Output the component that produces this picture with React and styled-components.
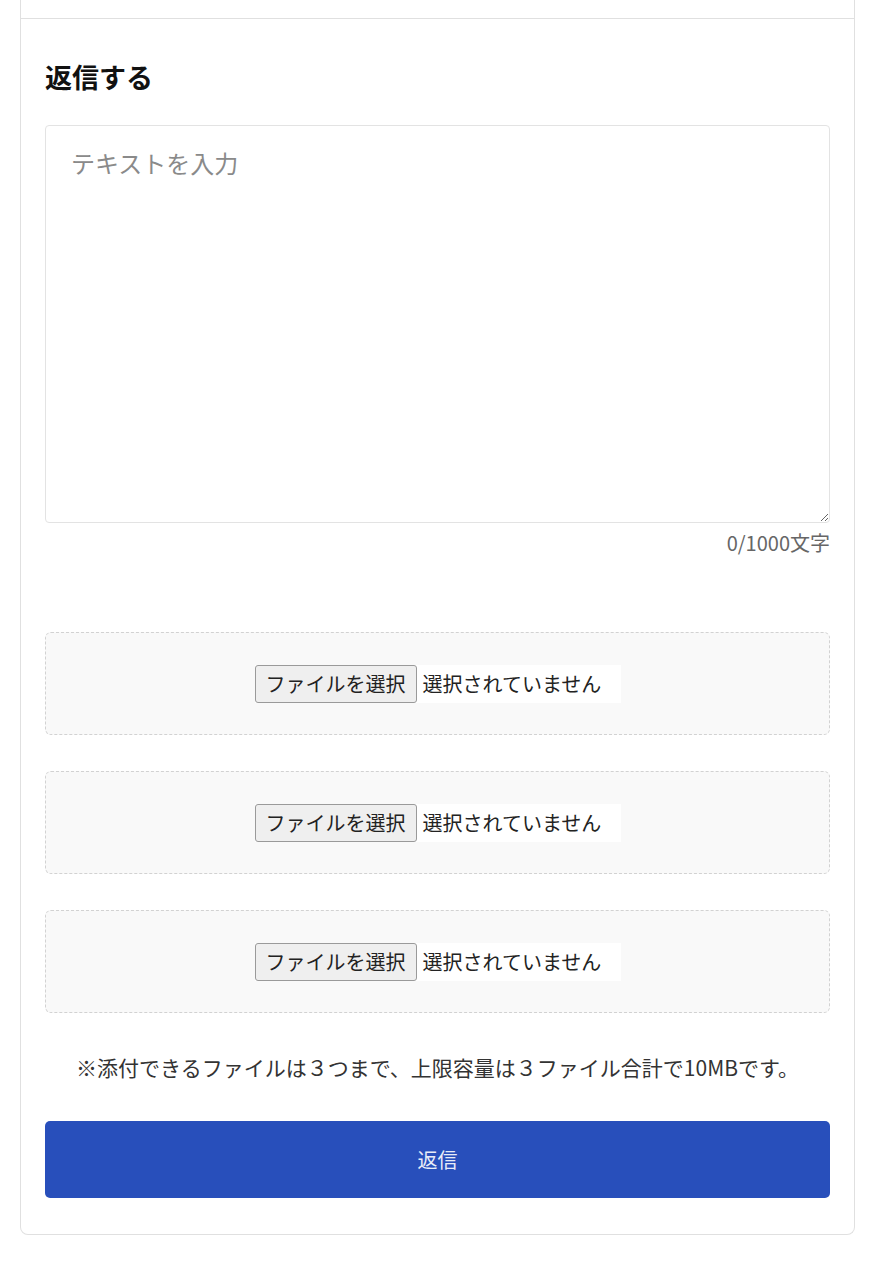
import React, { useState } from 'react'
import styled, { createGlobalStyle } from 'styled-components'

const GlobalStyle = createGlobalStyle`
  body {
    margin: 0;
    background: #fff;
    font-family: "Noto Sans CJK JP", "Noto Sans", sans-serif;
    color: #222;
  }
`

const Card = styled.div`
  margin-left: 20px;
  width: 833px;
  border: 1px solid #e0e0e0;
  border-top: none;
  border-radius: 0 0 8px 8px;
  background: #fff;
`

const PrevSection = styled.div`
  height: 18px;
  border-bottom: 1px solid #e0e0e0;
`

const ReplyForm = styled.form`
  display: flex;
  flex-direction: column;
  padding: 38px 24px 36px 24px;
`

const Title = styled.h2`
  margin: 0;
  font-size: 27px;
  line-height: 39px;
  font-weight: 700;
  color: #111;
`

const TextArea = styled.textarea`
  margin-top: 29px;
  box-sizing: border-box;
  width: 100%;
  height: 398px;
  border: 1px solid #e3e3e3;
  border-radius: 4px;
  padding: 20px 25px;
  font-family: "Noto Sans CJK JP", sans-serif;
  font-size: 24px;
  line-height: 34px;
  color: #222;
  outline: none;
  resize: vertical;

  &::placeholder {
    color: #8a8a8a;
  }
`

const Counter = styled.div`
  margin-top: 6px;
  text-align: right;
  font-size: 20px;
  line-height: 27px;
  color: #666;
`

const Attachments = styled.div`
  margin-top: 76px;
  display: flex;
  flex-direction: column;
  gap: 36px;
`

const DropBox = styled.div`
  box-sizing: border-box;
  height: 103px;
  border: 1px dashed #d2d2d2;
  border-radius: 6px;
  background: #f9f9f9;
  display: flex;
  align-items: center;
  justify-content: center;
`

const FileField = styled.label`
  display: flex;
  align-items: center;
  width: 366px;
  height: 38px;
  background: #fff;
  font-size: 20px;
  color: #222;
  cursor: pointer;
`

const PickButton = styled.span`
  box-sizing: border-box;
  height: 38px;
  padding: 0 10px;
  display: flex;
  align-items: center;
  background: #efefef;
  border: 1px solid #9a9a9a;
  border-radius: 3px;
  color: #222;
`

const FileName = styled.span`
  margin-left: 6px;
`

const HiddenInput = styled.input`
  display: none;
`

const Note = styled.p`
  margin: 39px 0 0;
  text-align: center;
  font-size: 21px;
  line-height: 30px;
  color: #333;
`

const SubmitButton = styled.button`
  margin-top: 39px;
  height: 77px;
  border: none;
  border-radius: 5px;
  background: #284fbb;
  color: #e8ecf8;
  font-family: "Noto Sans CJK JP", sans-serif;
  font-size: 20px;
  cursor: pointer;
`

function FilePicker() {
  return (
    <DropBox>
      <FileField>
        <HiddenInput type="file" />
        <PickButton>ファイルを選択</PickButton>
        <FileName>選択されていません</FileName>
      </FileField>
    </DropBox>
  )
}

export default function App() {
  const [text, setText] = useState('')

  return (
    <>
      <GlobalStyle />
      <Card>
        <PrevSection />
        <ReplyForm onSubmit={(e) => e.preventDefault()}>
          <Title>返信する</Title>
          <TextArea
            placeholder="テキストを入力"
            maxLength={1000}
            value={text}
            onChange={(e) => setText(e.target.value)}
          />
          <Counter>{text.length}/1000文字</Counter>
          <Attachments>
            {[0, 1, 2].map((i) => (
              <FilePicker key={i} />
            ))}
          </Attachments>
          <Note>※添付できるファイルは３つまで、上限容量は３ファイル合計で10MBです。</Note>
          <SubmitButton type="submit">返信</SubmitButton>
        </ReplyForm>
      </Card>
    </>
  )
}
